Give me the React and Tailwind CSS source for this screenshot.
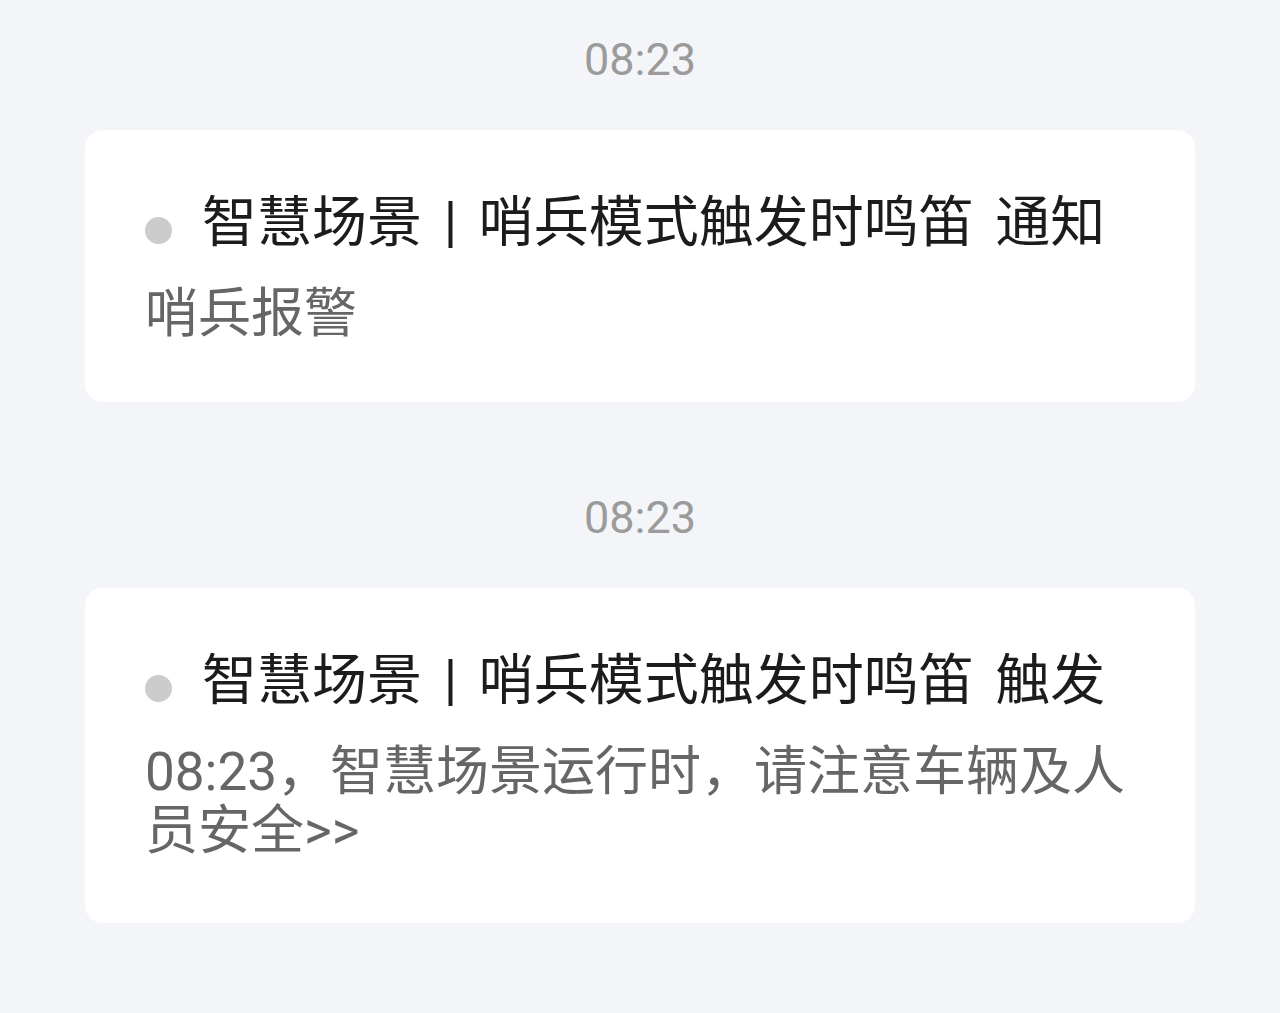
const font = { fontFamily: 'Roboto, "Noto Sans CJK SC", sans-serif' };

const TimeStamp = ({ children, className = '' }) => (
  <div className={`text-center text-[45px] leading-[44px] text-[#9b9b9b] ${className}`}>{children}</div>
);

const NoticeCard = ({ title, body, bottom = 'pb-[58px]' }) => (
  <div className={`bg-white rounded-[18px] pl-[60px] pr-[56px] pt-[62px] ${bottom}`}>
    <div className="flex items-center">
      <span className="h-[27px] w-[27px] rounded-full bg-[#cccccc] shrink-0 mt-[16px]"></span>
      <h2 className="ml-[30px] text-[55px] leading-[60px] text-[#1c1c1c] whitespace-nowrap [word-spacing:8px]">
        {title}
      </h2>
    </div>
    <p className="mt-[33px] text-[53px] leading-[59px] text-[#666666]">{body}</p>
  </div>
);

const App = () => {
  return (
    <div className="min-h-[1013px] bg-[#f4f5f9] px-[85px] pt-[38px]" style={font}>
      <TimeStamp>08:23</TimeStamp>
      <div className="mt-[48px]">
        <NoticeCard title="智慧场景 | 哨兵模式触发时鸣笛 通知" body="哨兵报警" />
      </div>
      <TimeStamp className="mt-[94px]">08:23</TimeStamp>
      <div className="mt-[48px]">
        <NoticeCard
          title="智慧场景 | 哨兵模式触发时鸣笛 触发"
          body="08:23，智慧场景运行时，请注意车辆及人员安全>>"
          bottom="pb-[62px]"
        />
      </div>
    </div>
  );
};

export default App;
